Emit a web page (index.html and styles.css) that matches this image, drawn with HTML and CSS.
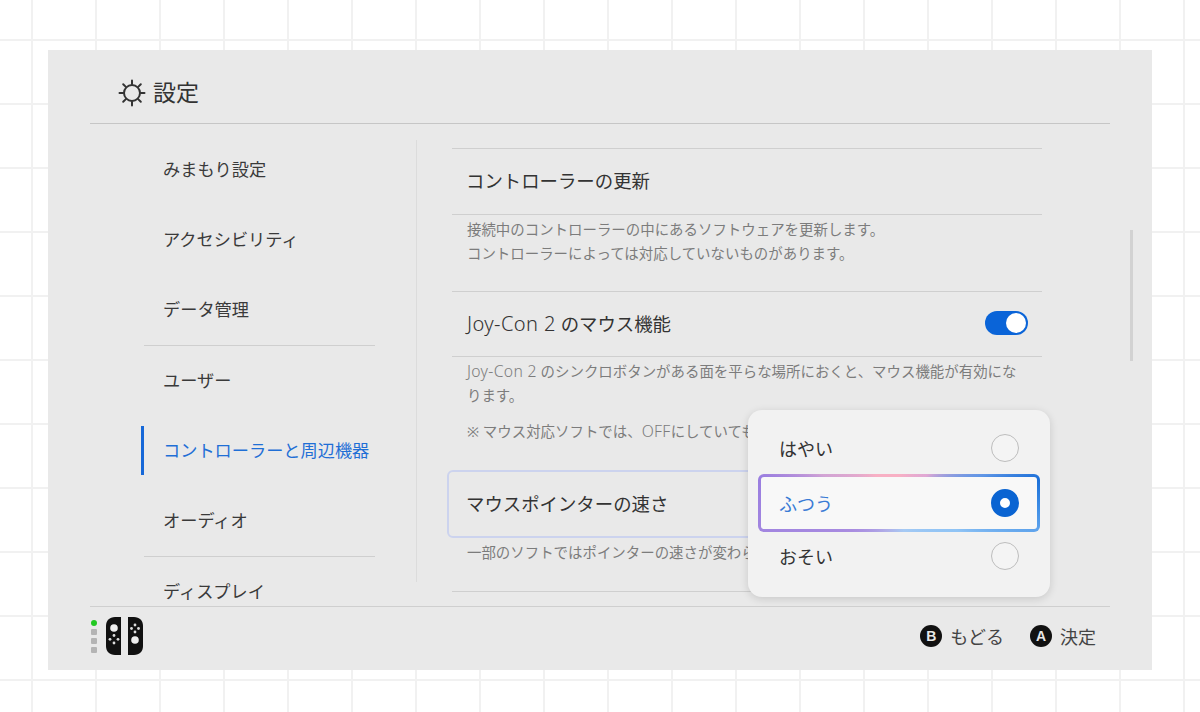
FILE: index.html
```html
<!DOCTYPE html>
<html lang="ja">
<head>
<meta charset="utf-8">
<title>設定</title>
<link rel="stylesheet" href="styles.css">
</head>
<body>
<div class="panel">
  <header class="head">
    <svg class="gear" width="28" height="28" viewBox="0 0 28 28" fill="none" stroke="#333" stroke-width="2" stroke-linecap="round">
      <circle cx="14" cy="14" r="8"/>
      <path d="M14 1.5V5M14 23v3.500M1.500 14H5M23 14h3.500M5.200 5.200l2.400 2.400M20.400 20.400l2.400 2.400M22.800 5.200l-2.400 2.400M7.600 20.400l-2.400 2.400"/>
    </svg>
    <h1 class="title">設定</h1>
  </header>
  <div class="main">
    <nav class="side">
      <div class="nav-item">みまもり設定</div>
      <div class="nav-item">アクセシビリティ</div>
      <div class="nav-item">データ管理</div>
      <div class="nav-rule"></div>
      <div class="nav-item">ユーザー</div>
      <div class="nav-item active">コントローラーと周辺機器</div>
      <div class="nav-item">オーディオ</div>
      <div class="nav-rule"></div>
      <div class="nav-item">ディスプレイ</div>
    </nav>
    <div class="vr"></div>
    <section class="content">
      <div class="row">コントローラーの更新</div>
      <div class="desc">
        <p>接続中のコントローラーの中にあるソフトウェアを更新します。</p>
        <p>コントローラーによっては対応していないものがあります。</p>
      </div>
      <div class="row row-toggle">
        <span><span class="latin">Joy-Con 2</span> のマウス機能</span>
        <span class="toggle"><span class="knob"></span></span>
      </div>
      <div class="desc desc-mouse">
        <p><span class="latin">Joy-Con 2</span> のシンクロボタンがある面を平らな場所におくと、マウス機能が有効になります。</p>
        <p class="note">※ マウス対応ソフトでは、<span class="latin">OFF</span>にしていても</p>
      </div>
      <div class="row-focus">マウスポインターの速さ</div>
      <div class="desc desc-last">
        <p>一部のソフトではポインターの速さが変わらないことがあります。</p>
      </div>
    </section>
    <div class="scrollbar"></div>
    <div class="popup">
      <div class="opt"><span>はやい</span><span class="radio"></span></div>
      <div class="opt selected"><span>ふつう</span><span class="radio on"></span></div>
      <div class="opt"><span>おそい</span><span class="radio"></span></div>
    </div>
  </div>
  <footer class="foot">
    <div class="device">
      <div class="leds"><i class="led lit"></i><i class="led"></i><i class="led"></i><i class="led"></i></div>
      <svg class="joy" width="38" height="38" viewBox="0 0 38 38">
        <path d="M15 0V38H9C3.500 38 0 34.500 0 29V9C0 3.500 3.500 0 9 0Z" fill="#111"/>
        <path d="M22 0V38H28C33.500 38 37 34.500 37 29V9C37 3.500 33.500 0 28 0Z" fill="#111"/>
        <circle cx="8" cy="11" r="3.800" fill="#eee"/>
        <circle cx="29" cy="23" r="3.800" fill="#eee"/>
        <g fill="#ddd">
          <circle cx="8" cy="18.500" r="1.400"/><circle cx="8" cy="26" r="1.400"/><circle cx="4" cy="22.300" r="1.400"/><circle cx="12" cy="22.300" r="1.400"/>
          <circle cx="29" cy="8" r="1.400"/><circle cx="29" cy="15" r="1.400"/><circle cx="25.500" cy="11.500" r="1.400"/><circle cx="32.500" cy="11.500" r="1.400"/>
        </g>
      </svg>
    </div>
    <div class="hints">
      <span class="hint"><b class="btn">B</b>もどる</span>
      <span class="hint"><b class="btn">A</b>決定</span>
    </div>
  </footer>
</div>
</body>
</html>
```

FILE: styles.css
```css
* { box-sizing: border-box; }
html, body { height: 100%; }
body {
  margin: 0;
  padding: 50px 48px 0;
  overflow: hidden;
  font-family: "Noto Sans", "Noto Sans CJK JP", sans-serif;
  color: #333;
  background-color: #fff;
  background-image:
    linear-gradient(to right, #f1f1f1 2px, transparent 2px),
    linear-gradient(to bottom, #f1f1f1 2px, transparent 2px);
  background-size: 64px 64px;
  background-position: 31px 39px;
}
p { margin: 0; }
.panel {
  width: 1104px;
  height: 620px;
  background: #e9e9e9;
  display: flex;
  flex-direction: column;
}
.head {
  flex: none;
  height: 74px;
  margin: 0 42px;
  padding: 13px 0 0 28px;
  border-bottom: 1px solid #c6c6c6;
  display: flex;
  align-items: center;
  gap: 7px;
}
.gear { flex: none; }
.title { margin: 0 0 2px; font-size: 23px; font-weight: 400; line-height: 1; color: #333; }
.main {
  flex: none;
  height: 482px;
  position: relative;
  display: flex;
  overflow: hidden;
}
.side {
  flex: none;
  width: 231px;
  margin-left: 96px;
  padding-top: 11px;
}
.nav-item {
  position: relative;
  height: 70px;
  padding: 0 0 3px 19px;
  display: flex;
  align-items: center;
  font-size: 17.2px;
  color: #3a3a3a;
  white-space: nowrap;
}
.nav-item.active { color: #1f6fd6; }
.nav-item.active::before {
  content: "";
  position: absolute;
  left: -3px;
  top: 10px;
  width: 3px;
  height: 49px;
  background: #1668d8;
}
.nav-rule { height: 1px; background: #cfcfcf; }
.vr {
  flex: none;
  width: 1px;
  margin: 16px 0 24px 41px;
  background: #dcdcdc;
}
.content {
  flex: none;
  width: 590px;
  margin-left: 35px;
  padding-top: 24px;
}
.row {
  height: 67px;
  padding: 0 14px 3px 14px;
  display: flex;
  align-items: center;
  justify-content: space-between;
  border-top: 1px solid #cfcfcf;
  border-bottom: 1px solid #cfcfcf;
  font-size: 18.4px;
  color: #333;
}
.row-toggle { height: 66px; padding-bottom: 2px; padding-left: 15px; }
.latin { font-size: 1.09em; font-weight: 300; letter-spacing: .02em; line-height: 1; }
.desc {
  height: 76px;
  padding: 3px 15px 0;
  font-size: 14.45px;
  line-height: 24px;
  color: #7c7c7c;
}
.desc-mouse { height: 113px; padding-right: 24px; }
.note { margin-top: 12px; white-space: nowrap; }
.desc-last { height: 54px; padding-top: 3px; border-bottom: 1px solid #cfcfcf; }
.row-focus {
  height: 68px;
  margin: 0 -5px;
  padding: 0 0 3px 17px;
  display: flex;
  align-items: center;
  border: 2px solid #ccd3ee;
  border-radius: 6px;
  font-size: 18.4px;
  color: #333;
}
.toggle {
  width: 43px;
  height: 24px;
  padding: 2px;
  border-radius: 12px;
  background: #0a64d8;
  display: flex;
  justify-content: flex-end;
}
.knob { width: 20px; height: 20px; border-radius: 50%; background: #fff; }
.scrollbar {
  flex: none;
  width: 3px;
  height: 131px;
  margin: 106px 0 0 88px;
  background: #d2d2d2;
}
.popup {
  position: absolute;
  left: 700px;
  top: 286px;
  width: 302px;
  height: 187px;
  padding: 12px 10px;
  border-radius: 14px;
  background: #f2f2f2;
  box-shadow: 0 2px 8px rgba(0,0,0,.14);
  display: flex;
  flex-direction: column;
}
.opt {
  height: 54px;
  padding: 0 21px 2px 21px;
  display: flex;
  align-items: center;
  justify-content: space-between;
  font-size: 18px;
  color: #333;
}
.opt.selected {
  height: 58px;
  margin: -2px 0;
  position: relative;
  color: #3a7bd5;
  border: 3px solid transparent;
  border-radius: 6px;
  padding: 0 18px 0 18px;
  background:
    linear-gradient(#f8f8f8, #f8f8f8) padding-box,
    conic-gradient(#f8b0c4 0deg, #e0a8d4 45deg, #5f96e6 72deg, #1a6fd8 80deg, #3f8ee6 92deg, #90c4f5 115deg, #a6caf4 170deg, #b0aee8 205deg, #a98ce0 240deg, #9a7ee0 281deg, #d2a4d4 290deg, #f8b0c4 320deg, #f8b0c4 360deg) border-box;
}
.radio {
  width: 28px;
  height: 28px;
  border-radius: 50%;
  border: 1.500px solid #bdbdbd;
  background: #f4f4f4;
}
.radio.on { border: 9px solid #0a64d2; background: #fff; }
.foot {
  flex: none;
  height: 64px;
  margin: 0 42px;
  padding: 0 14px 6px 0;
  border-top: 1px solid #cfcfcf;
  display: flex;
  align-items: center;
  justify-content: space-between;
}
.device { display: flex; align-items: center; gap: 9px; margin-top: 1px; }
.leds { display: flex; flex-direction: column; gap: 3px; padding-left: 1px; }
.led { display: block; width: 6px; height: 6px; border-radius: 1px; background: #b4b4b4; }
.led.lit { background: #22c922; border-radius: 50%; }
.hints { display: flex; gap: 26px; font-size: 18px; color: #444; }
.hint { display: flex; align-items: center; gap: 8px; }
.btn {
  width: 22px;
  height: 22px;
  border-radius: 50%;
  background: #111;
  color: #e8e8e8;
  font: 700 14px/22px "Liberation Sans", sans-serif;
  text-align: center;
}
```
